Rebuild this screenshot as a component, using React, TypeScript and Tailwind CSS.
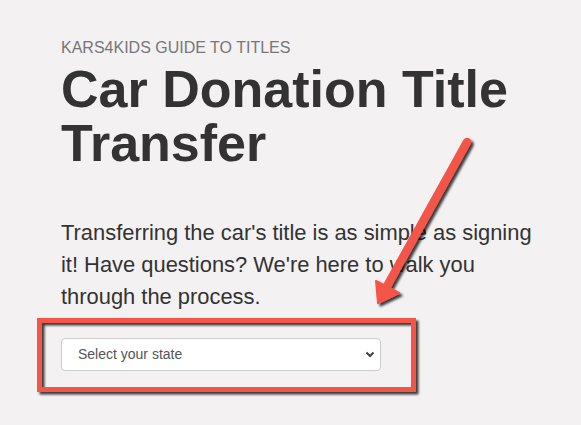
export default function App() {
  return (
    <div className="relative min-h-[425px] w-full overflow-hidden bg-[#f3f1f2] font-['Liberation_Sans',Arial,sans-serif]">
      <div className="w-[541px] pl-[61px] pt-[36px]">
        <p className="text-[16px] leading-[24px] text-[#777]">KARS4KIDS GUIDE TO TITLES</p>
        <h1 className="mt-[2px] text-[52px] font-bold leading-[54px] text-[#333]">
          Car Donation Title Transfer
        </h1>
        <p className="mt-[47px] text-[21.9px] leading-[32px] text-[#333]">
          Transferring the car's title is as simple as signing it! Have questions? We're here to walk you
          through the process.
        </p>
        <div className="relative mt-[25px] w-[320px]">
          <select
            defaultValue=""
            className="h-[33px] w-full appearance-none rounded-[4px] border border-[#ccc] bg-white pl-[16px] text-[14px] text-[#555] outline-none"
          >
            <option value="">Select your state</option>
          </select>
          <svg
            className="pointer-events-none absolute right-[6px] top-[13px]"
            width="10"
            height="7"
            viewBox="0 0 10 7"
          >
            <path d="M1.5 1.5 5 5l3.5-3.5" fill="none" stroke="#444" strokeWidth="2" />
          </svg>
        </div>
      </div>

      {/* callout: arrow and highlight box */}
      <svg className="pointer-events-none absolute left-0 top-0" width="581" height="425">
        <defs>
          <filter id="drop" x="-20%" y="-20%" width="140%" height="140%">
            <feDropShadow dx="2.5" dy="2.5" stdDeviation="1.2" floodColor="#000" floodOpacity="0.75" />
          </filter>
        </defs>
        <g filter="url(#drop)">
          <rect x="39.5" y="320.5" width="374" height="69" fill="none" stroke="#f4544a" strokeWidth="5" />
        </g>
        <g filter="url(#drop)" fill="#f4544a">
          <line x1="467" y1="142" x2="386" y2="288" stroke="#f4544a" strokeWidth="8.5" strokeLinecap="round" />
          <polygon points="378,303 376,281 399,293" strokeLinejoin="round" stroke="#f4544a" strokeWidth="2" />
        </g>
      </svg>
    </div>
  );
}
